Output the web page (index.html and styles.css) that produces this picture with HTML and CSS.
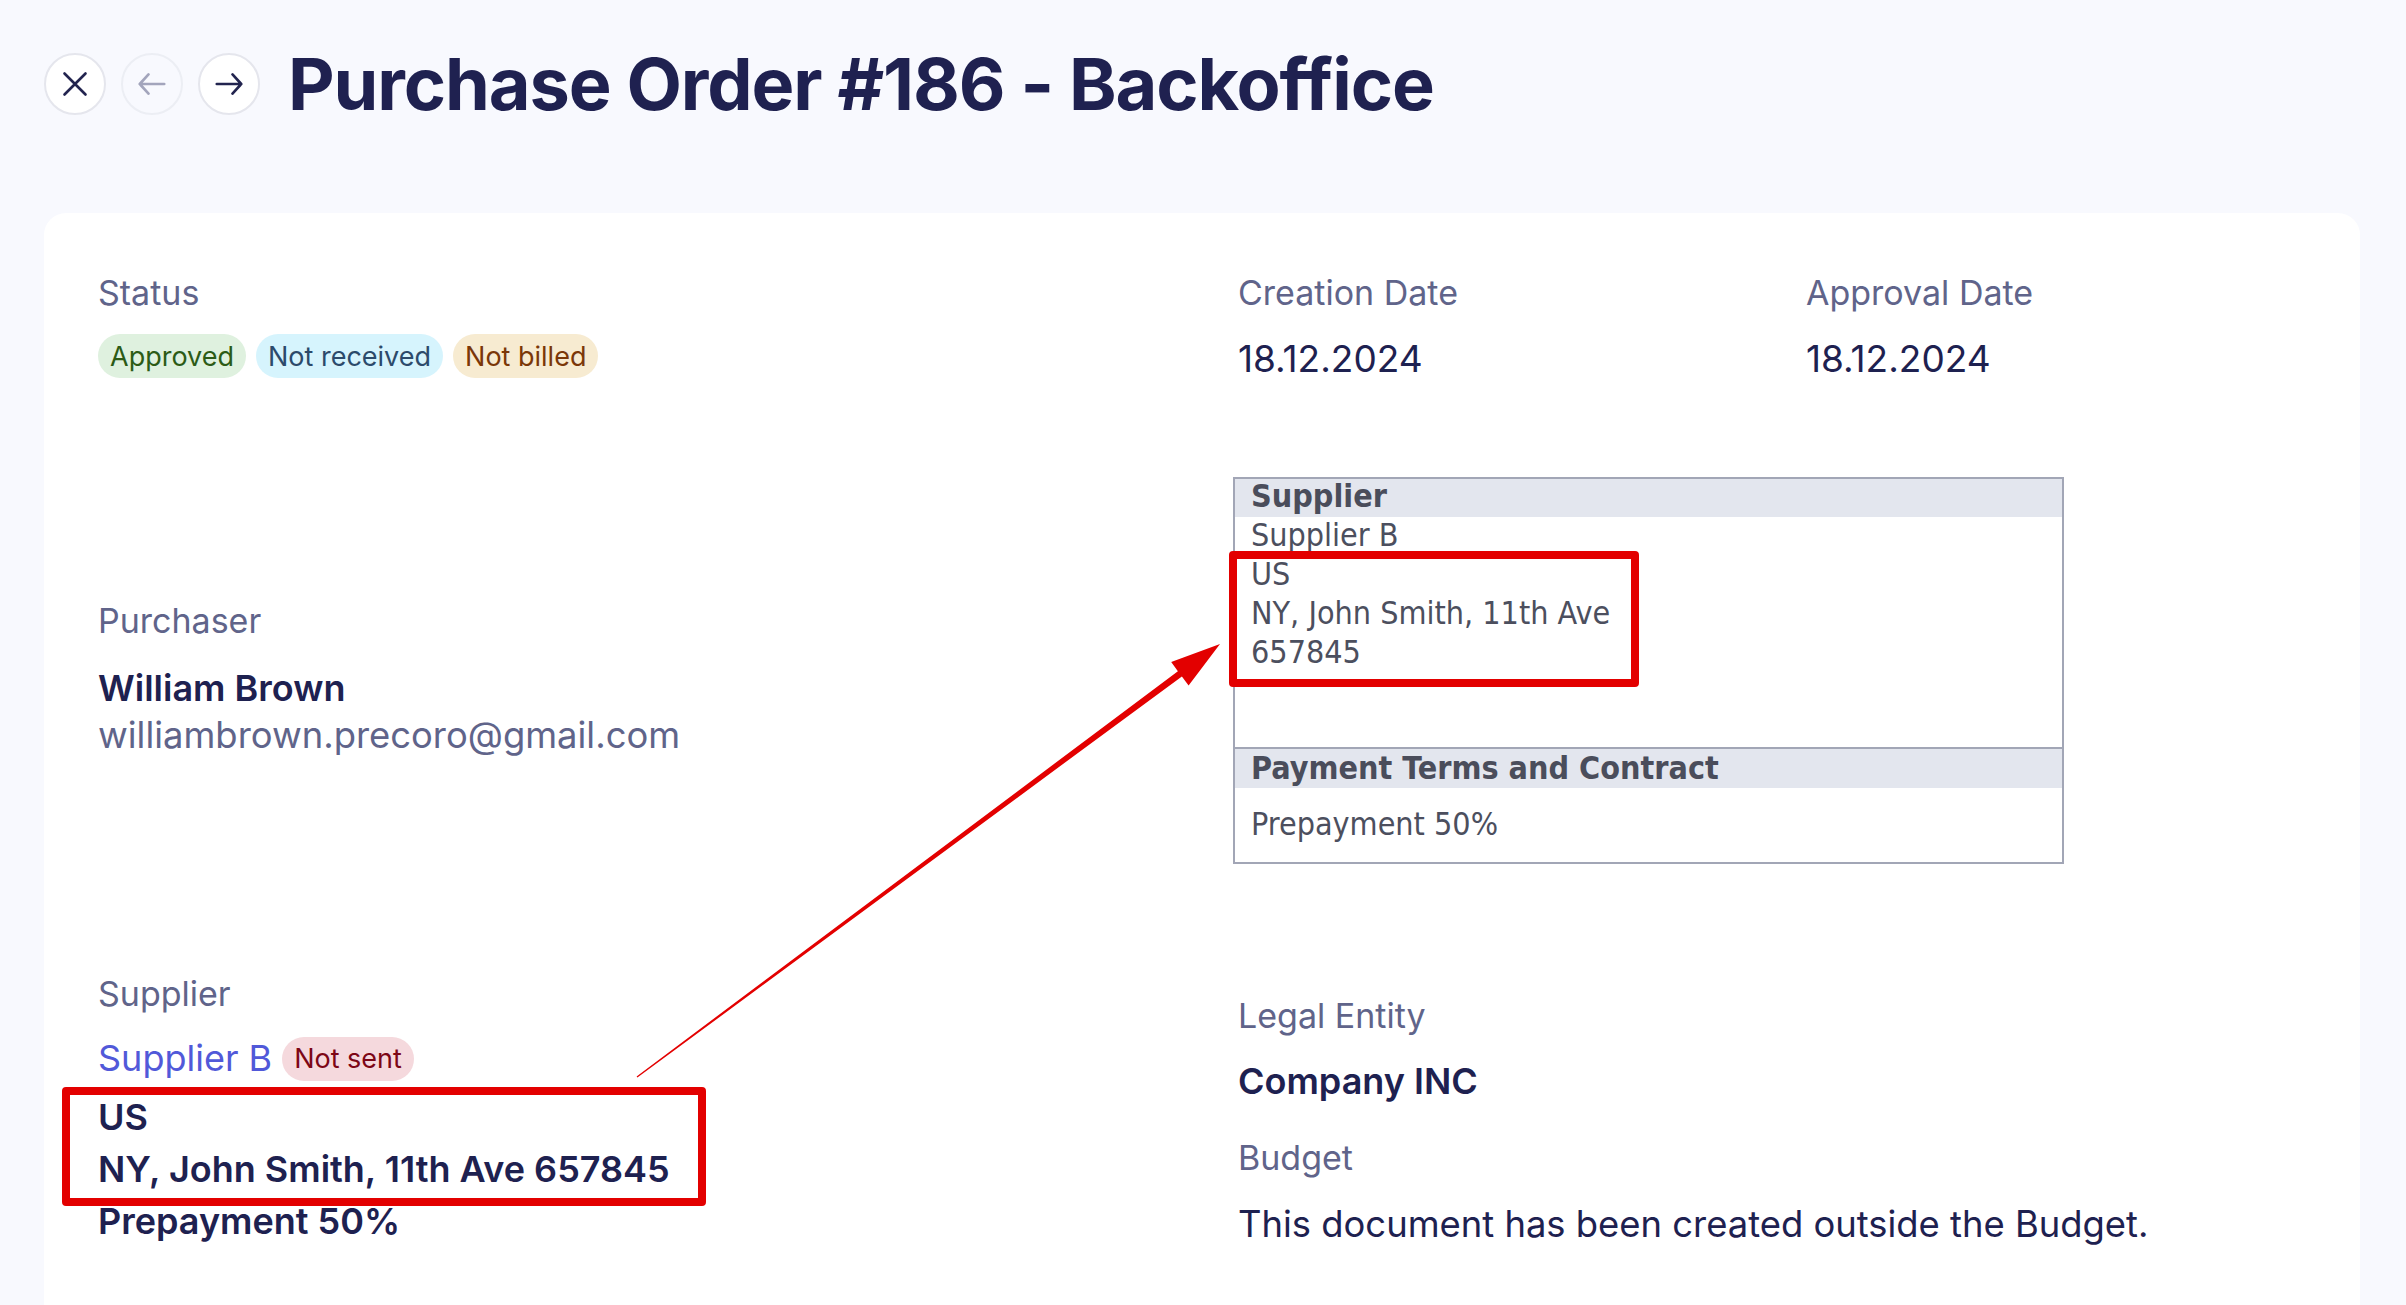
FILE: index.html
```html
<!DOCTYPE html>
<html lang="en">
<head>
<meta charset="utf-8">
<title>Purchase Order #186 - Backoffice</title>
<link rel="stylesheet" href="styles.css">
</head>
<body>
<header class="topbar">
  <button class="circle-btn" aria-label="Close">
    <svg viewBox="0 0 32 32" width="32" height="32"><path d="M4 4 L28 28 M28 4 L4 28" stroke="#22244f" stroke-width="3" stroke-linecap="round" fill="none"/></svg>
  </button>
  <button class="circle-btn disabled" aria-label="Previous">
    <svg viewBox="0 0 32 32" width="32" height="32"><path d="M30 16 H2 M12 5 L2 16 L12 27" stroke="#a3a5bc" stroke-width="3" stroke-linecap="round" stroke-linejoin="round" fill="none"/></svg>
  </button>
  <button class="circle-btn" aria-label="Next">
    <svg viewBox="0 0 32 32" width="32" height="32"><path d="M2 16 H30 M20 5 L30 16 L20 27" stroke="#22244f" stroke-width="3" stroke-linecap="round" stroke-linejoin="round" fill="none"/></svg>
  </button>
  <h1 class="title">Purchase Order #186 - Backoffice</h1>
</header>

<main class="card">
  <section class="top-row">
    <div class="col-wide">
      <div class="label">Status</div>
      <div class="badges">
        <span class="badge badge-green">Approved</span>
        <span class="badge badge-blue">Not received</span>
        <span class="badge badge-orange">Not billed</span>
      </div>
    </div>
    <div class="col-narrow">
      <div class="label">Creation Date</div>
      <div class="date">18.12.2024</div>
    </div>
    <div class="col-rest">
      <div class="label">Approval Date</div>
      <div class="date">18.12.2024</div>
    </div>
  </section>

  <section class="main-row">
    <div class="col-wide left-col">
      <div class="label purchaser-label">Purchaser</div>
      <div class="person">William Brown</div>
      <div class="email">williambrown.precoro@gmail.com</div>

      <div class="label supplier-label">Supplier</div>
      <div class="supplier-line">
        <a class="link" href="#">Supplier B</a>
        <span class="badge badge-red">Not sent</span>
      </div>
      <div class="address">
        <div>US</div>
        <div>NY, John Smith, 11th Ave 657845</div>
        <div>Prepayment 50%</div>
      </div>
    </div>

    <div class="col-right">
      <div class="doc-box">
        <div class="doc-head">Supplier</div>
        <div class="doc-body doc-body-main">
          <div>Supplier B</div>
          <div>US</div>
          <div>NY, John Smith, 11th Ave</div>
          <div>657845</div>
        </div>
        <div class="doc-head doc-head-2">Payment Terms and Contract</div>
        <div class="doc-body doc-body-terms">
          <div>Prepayment 50%</div>
        </div>
      </div>

      <div class="label legal-label">Legal Entity</div>
      <div class="strong-value">Company INC</div>
      <div class="label budget-label">Budget</div>
      <div class="budget-text">This document has been created outside the Budget.</div>
    </div>
  </section>
</main>

<div class="highlight highlight-left"></div>
<div class="highlight highlight-right"></div>
<svg class="arrow" width="2406" height="1305" viewBox="0 0 2406 1305">
  <polygon points="636.6,1076.4 1177.9,671.2 1171.2,662.0 1220,644 1188.6,685.6 1181.9,676.4 637.4,1077.6" fill="#e30000"/>
</svg>
</body>
</html>
```

FILE: styles.css
```css
* { box-sizing: border-box; }

html, body {
  margin: 0;
  padding: 0;
}

body {
  background: #f8f9fe;
  font-family: "Inter", "Liberation Sans", sans-serif;
  color: #1e2150;
  height: 1305px;
  overflow: hidden;
  position: relative;
}

/* ---------- header ---------- */
.topbar {
  display: flex;
  align-items: center;
  padding: 40px 0 0 44px;
}

.circle-btn {
  width: 62px;
  height: 62px;
  border-radius: 50%;
  border: 2px solid #e5e6ed;
  background: #ffffff;
  display: flex;
  align-items: center;
  justify-content: center;
  padding: 0;
  margin-right: 15px;
  cursor: pointer;
}
.circle-btn svg { width: 28px; height: 28px; }
.circle-btn.disabled {
  background: transparent;
  border-color: #eceef4;
}

.title {
  margin: 0 0 0 13px;
  font-size: 72px;
  line-height: 88px;
  font-weight: 700;
  color: #1f2150;
  letter-spacing: -1.1px;
}

/* ---------- card ---------- */
.card {
  margin: 85px 0 0 44px;
  width: 2316px;
  height: 1200px;
  background: #ffffff;
  border-radius: 22px;
  padding: 60px 0 0 54px;
}

.top-row {
  display: flex;
  height: 108px;
}

.col-wide { width: 1140px; flex: none; }
.col-narrow { width: 568px; flex: none; }
.col-rest { flex: 1; }

.label {
  font-size: 34px;
  line-height: 40px;
  color: #60648a;
}

.date {
  margin-top: 24px;
  font-size: 37px;
  line-height: 44px;
  color: #1e2150;
}

.badges {
  display: flex;
  gap: 10px;
  margin-top: 21px;
}

.badge {
  display: inline-flex;
  align-items: center;
  height: 44px;
  padding: 0 12px;
  border-radius: 22px;
  font-size: 27px;
}
.badge-green { background: #dff1df; color: #2c5b16; }
.badge-blue { background: #d6f4fd; color: #2c4a6b; }
.badge-orange { background: #f7ebd1; color: #7b3708; }
.badge-red { background: #f5d9dd; color: #7d0616; }

/* ---------- main row ---------- */
.main-row {
  display: flex;
}

.left-col { display: flex; flex-direction: column; align-items: flex-start; }

.purchaser-label { margin-top: 220px; }

.person {
  margin-top: 25px;
  font-size: 36px;
  line-height: 44px;
  font-weight: 600;
  color: #1e2150;
}

.email {
  margin-top: 3px;
  font-size: 36.4px;
  line-height: 44px;
  color: #60648a;
}

.supplier-label { margin-top: 217px; }

.supplier-line {
  margin-top: 22px;
  display: flex;
  align-items: center;
  gap: 10px;
  height: 45px;
}

.link {
  font-size: 36px;
  line-height: 45px;
  color: #5159d9;
  text-decoration: none;
}

.address {
  margin-top: 10px;
  font-size: 36px;
  line-height: 52px;
  font-weight: 600;
  color: #1e2150;
}

/* ---------- pasted document box ---------- */
.col-right { flex: 1; }

.doc-box {
  margin-top: 96px;
  margin-left: -5px;
  width: 831px;
  border: 2px solid #a2a6b6;
  font-family: "DejaVu Sans Condensed", "DejaVu Sans", sans-serif;
  font-stretch: condensed;
  font-size: 32px;
  color: #4c4f5e;
}

.doc-head {
  height: 38px;
  line-height: 34px;
  padding: 0 0 4px 16px;
  background: #e3e6ee;
  font-weight: 700;
  color: #4a4d5b;
}

.doc-head-2 {
  height: 41px;
  line-height: 39px;
  padding: 0 0 0 16px;
  border-top: 2px solid #a2a6b6;
}

.doc-body {
  padding-left: 16px;
  line-height: 39px;
}

.doc-body-main {
  height: 231px;
  margin-top: -1px;
}

.doc-body-terms {
  height: 74px;
  padding-top: 17px;
}

.legal-label { margin-top: 132px; }

.strong-value {
  margin-top: 23px;
  font-size: 36px;
  line-height: 44px;
  font-weight: 600;
  color: #1e2150;
}

.budget-label { margin-top: 35px; }

.budget-text {
  margin-top: 24px;
  font-size: 36.4px;
  line-height: 44px;
  color: #1e2150;
}

/* ---------- annotation overlays ---------- */
.highlight {
  position: absolute;
  border: 8px solid #e30000;
  border-radius: 4px;
  pointer-events: none;
}
.highlight-left {
  left: 62px;
  top: 1087px;
  width: 644px;
  height: 119px;
}
.highlight-right {
  left: 1229px;
  top: 551px;
  width: 410px;
  height: 136px;
}

.arrow {
  position: absolute;
  left: 0;
  top: 0;
  pointer-events: none;
}
```
